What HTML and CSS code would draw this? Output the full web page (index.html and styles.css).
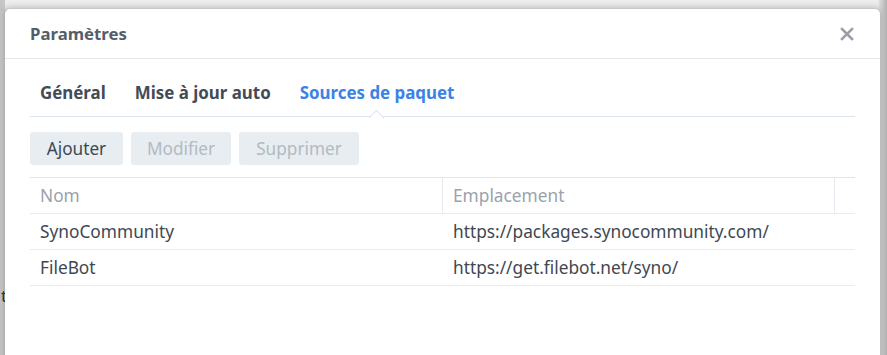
FILE: index.html
```html
<!DOCTYPE html>
<html lang="fr">
<head>
<meta charset="utf-8">
<link rel="stylesheet" href="styles.css">
</head>
<body>
<div class="backdrop">
  <span class="behind-text">t</span>
</div>
<div class="dialog">
  <div class="header">
    <span class="title">Paramètres</span>
    <svg class="close" width="14" height="14" viewBox="0 0 14 14"><path d="M2 2L12 12M12 2L2 12" stroke="#9aa0a8" stroke-width="2.6" stroke-linecap="square"/></svg>
  </div>
  <div class="body">
    <div class="tabs">
      <span class="tab">Général</span>
      <span class="tab">Mise à jour auto</span>
      <span class="tab active">Sources de paquet</span>
    </div>
    <div class="toolbar">
      <button class="btn">Ajouter</button>
      <button class="btn disabled">Modifier</button>
      <button class="btn disabled">Supprimer</button>
    </div>
    <div class="grid">
      <div class="row head">
        <div class="cell c1">Nom</div>
        <div class="cell c2">Emplacement</div>
        <div class="cell c3"></div>
      </div>
      <div class="row">
        <div class="cell c1">SynoCommunity</div>
        <div class="cell c2">https://packages.synocommunity.com/</div>
        <div class="cell c3"></div>
      </div>
      <div class="row">
        <div class="cell c1">FileBot</div>
        <div class="cell c2">https://get.filebot.net/syno/</div>
        <div class="cell c3"></div>
      </div>
    </div>
  </div>
</div>
</body>
</html>
```
FILE: styles.css
```css
html, body {
  margin: 0;
  padding: 0;
  height: 355px;
  overflow: hidden;
}
body {
  background: linear-gradient(to bottom, #efefef 0, #e4e4e4 8px, #c9c9c9 12px);
  font-family: "Noto Sans", "Open Sans", sans-serif;
  position: relative;
}
.backdrop {
  position: absolute;
  left: 0;
  top: 0;
  width: 887px;
  height: 355px;
  background: linear-gradient(to right, #c4c4c4 0, #c8c8c8 5px, transparent 5px, transparent 878px, #d8d8d8 880px, #b0b0b0 887px);
}
.behind-text {
  position: absolute;
  left: 1px;
  top: 284px;
  font-size: 17px;
  color: #333;
}
.dialog {
  position: absolute;
  left: 5px;
  top: 9px;
  width: 875px;
  height: 370px;
  background: #fff;
  border-radius: 5px 5px 0 0;
  box-shadow: 0 0 6px rgba(0,0,0,0.25);
  box-sizing: border-box;
}
.header {
  height: 49px;
  border-bottom: 1px solid #e3e6ea;
  display: flex;
  align-items: center;
  justify-content: space-between;
  padding: 0 26px 0 25px;
}
.title {
  font-size: 16.8px;
  font-weight: 700;
  color: #545e68;
}
.close {
  display: block;
}
.body {
  padding: 0 25px;
}
.tabs {
  display: flex;
  gap: 29px;
  height: 57px;
  align-items: center;
  padding-left: 10px;
  border-bottom: 1px solid #dde3ec;
  position: relative;
}
.tab {
  font-size: 16.9px;
  font-weight: 700;
  color: #434c56;
  position: relative;
  padding-top: 9px;
}
.tab.active {
  color: #3b82e6;
}
.tab.active::after {
  content: "";
  position: absolute;
  left: 50%;
  bottom: -19px;
  width: 10px;
  height: 10px;
  margin-left: -6px;
  background: #fff;
  border-left: 1px solid #dde3ec;
  border-top: 1px solid #dde3ec;
  transform: rotate(45deg);
}
.toolbar {
  display: flex;
  gap: 8px;
  padding-top: 15px;
  padding-bottom: 12px;
}
.btn {
  font-family: inherit;
  font-size: 17.2px;
  height: 33px;
  border: none;
  border-radius: 3px;
  background: #e8edf1;
  color: #3f4852;
  padding: 0;
  cursor: default;
}
.btn:nth-child(1) { width: 93px; }
.btn:nth-child(2) { width: 100px; }
.btn:nth-child(3) { width: 120px; }
.btn.disabled {
  color: #b3bac2;
}
.grid {
  border-top: 1px solid #dde5ed;
  width: 825px;
}
.row {
  display: flex;
  height: 35px;
  border-bottom: 1px solid #e8ecf0;
  font-size: 17.3px;
  color: #3e4852;
}
.row.head {
  color: #9aa2ab;
}
.cell {
  display: flex;
  align-items: center;
  padding-left: 10px;
  box-sizing: border-box;
  white-space: nowrap;
}
.c1 { width: 413px; }
.c2 { width: 392px; }
.c3 { width: 20px; }
.row.head .c1,
.row.head .c2 {
  border-right: 1px solid #e4eaf0;
}
```
